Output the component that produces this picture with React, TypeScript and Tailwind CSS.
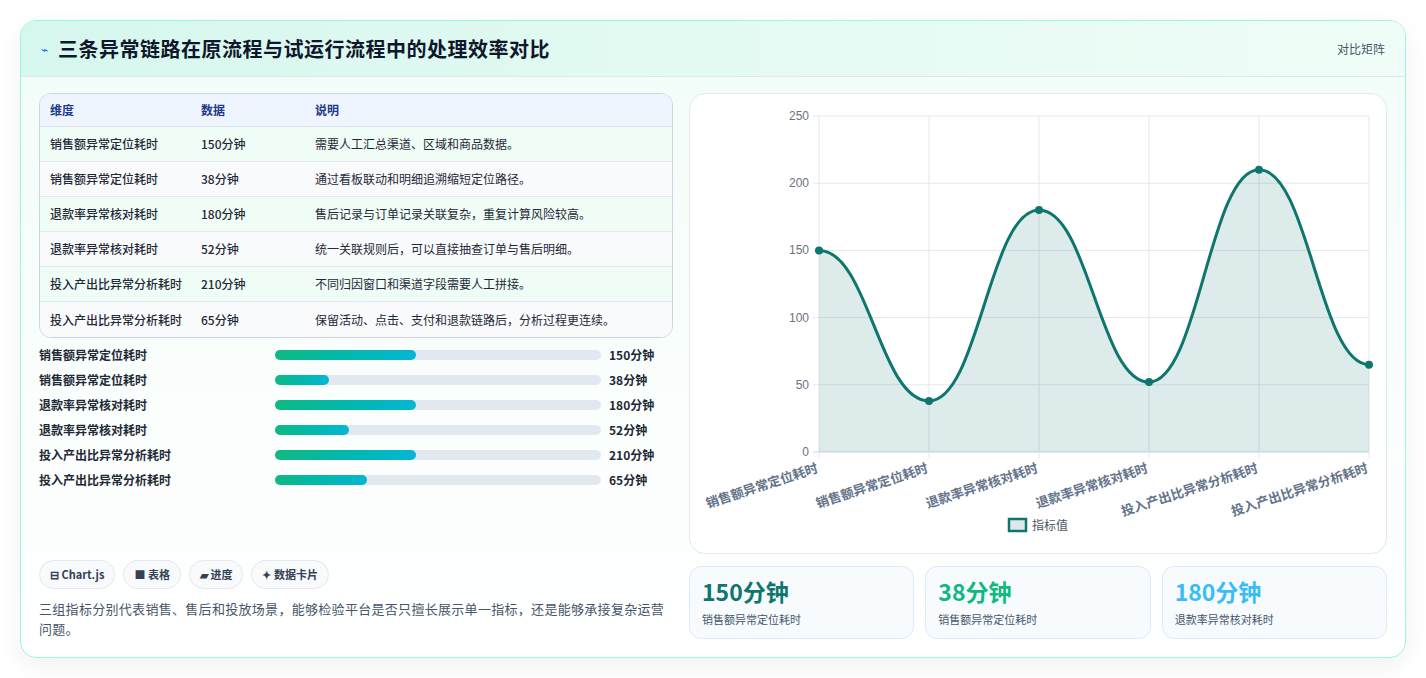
import React from 'react';

const font = { fontFamily: '"Noto Sans CJK SC", "Noto Sans", sans-serif' };

const rows = [
  ['销售额异常定位耗时', '150分钟', '需要人工汇总渠道、区域和商品数据。'],
  ['销售额异常定位耗时', '38分钟', '通过看板联动和明细追溯缩短定位路径。'],
  ['退款率异常核对耗时', '180分钟', '售后记录与订单记录关联复杂，重复计算风险较高。'],
  ['退款率异常核对耗时', '52分钟', '统一关联规则后，可以直接抽查订单与售后明细。'],
  ['投入产出比异常分析耗时', '210分钟', '不同归因窗口和渠道字段需要人工拼接。'],
  ['投入产出比异常分析耗时', '65分钟', '保留活动、点击、支付和退款链路后，分析过程更连续。'],
];

const bars = [141, 54, 141, 74, 141, 92];
const values = [150, 38, 180, 52, 210, 65];

function Chart() {
  const x0 = 129, x1 = 679, y0 = 22, y1 = 358;
  const step = (x1 - x0) / 5;
  const py = (v: number) => y1 - (v / 250) * (y1 - y0);
  const pts = values.map((v, i) => [x0 + i * step, py(v)]);
  let d = `M${pts[0][0]},${pts[0][1]}`;
  for (let i = 1; i < pts.length; i++) {
    const [ax, ay] = pts[i - 1];
    const [bx, by] = pts[i];
    d += ` C${ax + step * 0.45},${ay} ${bx - step * 0.45},${by} ${bx},${by}`;
  }
  const area = `${d} L${x1},${y1} L${x0},${y1} Z`;
  return (
    <svg width="698" height="460" className="block">
      {[0, 50, 100, 150, 200, 250].map((t) => (
        <g key={t}>
          <line x1={x0 - 6} x2={x1} y1={py(t)} y2={py(t)} stroke={t === 0 ? '#cbd5e1' : '#e5e7eb'} />
          <text x={x0 - 10} y={py(t) + 4} textAnchor="end" fontSize="12" fill="#6b7280" fontFamily="Liberation Sans, sans-serif">{t}</text>
        </g>
      ))}
      {pts.map(([x], i) => (
        <line key={i} x1={x} x2={x} y1={y0} y2={y1 + 6} stroke="#e5e7eb" />
      ))}
      <path d={area} fill="#0f766e" fillOpacity="0.14" />
      <path d={d} fill="none" stroke="#0f766e" strokeWidth="3" />
      {pts.map(([x, y], i) => (
        <circle key={i} cx={x} cy={y} r="4" fill="#0f766e" />
      ))}
      {['销售额异常定位耗时', '销售额异常定位耗时', '退款率异常核对耗时', '退款率异常核对耗时', '投入产出比异常分析耗时', '投入产出比异常分析耗时'].map((l, i) => (
        <text key={i} x={pts[i][0]} y={y1 + 20} textAnchor="end" fontSize="13" fontWeight="600" fill="#64748b" transform={`rotate(-18 ${pts[i][0]} ${y1 + 20})`} style={font}>{l}</text>
      ))}
      <rect x="319" y="425" width="17" height="12" fill="#dbeae9" stroke="#0f766e" strokeWidth="2.5" />
      <text x="342" y="436" fontSize="12" fill="#4b5563" style={font}>指标值</text>
    </svg>
  );
}

export default function App() {
  return (
    <div className="w-[1426px] h-[678px] bg-white p-5" style={font}>
      <div className="rounded-2xl border border-teal-200 bg-gradient-to-b from-[#f2fdf8] to-white shadow-[0_8px_24px_rgba(0,0,0,0.06)] overflow-hidden h-[638px]">
        <div className="h-[56px] flex items-center justify-between px-5 border-b border-[#dbe8ee] bg-gradient-to-r from-[#d6f7ee] to-[#f0fdf7]">
          <div className="flex items-center gap-2.5">
            <span className="text-[#2563eb] text-xs">⌁</span>
            <h1 className="text-[20px] font-bold text-[#0f172a] tracking-[0.5px]">三条异常链路在原流程与试运行流程中的处理效率对比</h1>
          </div>
          <span className="text-xs text-[#475569]">对比矩阵</span>
        </div>
        <div className="flex gap-4 px-[18px] pt-4">
          <div className="w-[634px] flex flex-col">
            <div className="rounded-xl border border-[#cbd5e1] overflow-hidden bg-white">
              <div className="flex h-[33px] items-center bg-[#eef5fe] border-b border-[#dbe3ee] text-[12px] font-semibold text-[#1e3a8a]">
                <div className="w-[161px] pl-2.5">维度</div>
                <div className="w-[114px]">数据</div>
                <div>说明</div>
              </div>
              {rows.map((r, i) => (
                <div key={i} className={`flex h-[35px] items-center text-[12px] text-[#1f2937] ${i < 5 ? 'border-b border-[#e2e8f0]' : ''} ${i % 2 ? 'bg-[#f8fafc]' : 'bg-[#f0fdf6]'}`}>
                  <div className="w-[161px] pl-2.5 font-medium">{r[0]}</div>
                  <div className="w-[114px] font-medium">{r[1]}</div>
                  <div>{r[2]}</div>
                </div>
              ))}
            </div>
            <div className="mt-[9px] flex flex-col gap-[9px]">
              {rows.map((r, i) => (
                <div key={i} className="flex items-center h-4 text-[12px] font-semibold text-[#1f2937]">
                  <div className="w-[236px]">{r[0]}</div>
                  <div className="w-[326px] h-[10px] rounded-full bg-[#e2e8f0]">
                    <div className="h-full rounded-full bg-gradient-to-r from-[#10b981] to-[#06b6d4]" style={{ width: bars[i] }} />
                  </div>
                  <div className="ml-2 font-bold">{r[1]}</div>
                </div>
              ))}
            </div>
            <div className="mt-[72px] flex gap-2">
              {['⊟ Chart.js', '■ 表格', '▰ 进度', '✦ 数据卡片'].map((c) => (
                <span key={c} className="h-[29px] px-2.5 flex items-center rounded-full border border-[#e2e8f0] bg-[#f8fafc] text-[11px] font-semibold text-[#334155]">{c}</span>
              ))}
            </div>
            <p className="mt-2.5 text-[13px] leading-[20px] text-[#475569] tracking-[0.3px]">三组指标分别代表销售、售后和投放场景，能够检验平台是否只擅长展示单一指标，还是能够承接复杂运营问题。</p>
          </div>
          <div className="w-[698px] flex flex-col gap-3">
            <div className="h-[461px] rounded-2xl border border-[#e2e8f0] bg-white overflow-hidden">
              <Chart />
            </div>
            <div className="flex gap-[11px]">
              {[['150分钟', 'text-[#0f766e]', '销售额异常定位耗时'], ['38分钟', 'text-[#10b981]', '销售额异常定位耗时'], ['180分钟', 'text-[#38bdf8]', '退款率异常核对耗时']].map(([v, c, l], i) => (
                <div key={i} className="flex-1 h-[73px] rounded-xl border border-[#dbeafe] bg-[#f8fbfe] px-3 pt-2">
                  <div className={`text-[23px] font-bold leading-[32px] ${c}`}>{v}</div>
                  <div className="mt-1 text-[11px] text-[#475569]">{l}</div>
                </div>
              ))}
            </div>
          </div>
        </div>
      </div>
    </div>
  );
}
